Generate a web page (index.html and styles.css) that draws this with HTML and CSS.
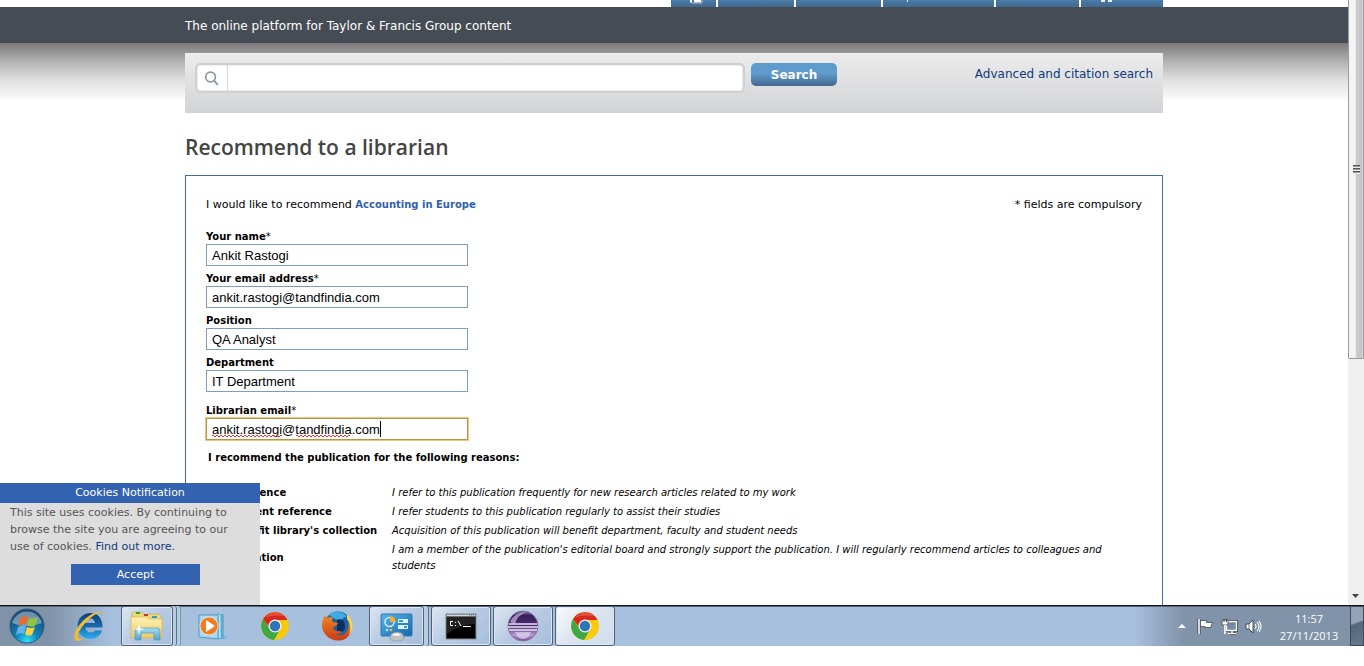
FILE: index.html
```html
<!DOCTYPE html>
<html lang="en">
<head>
<meta charset="utf-8">
<title>Recommend to a librarian</title>
<link rel="stylesheet" href="styles.css">
</head>
<body>
<svg class="defs" width="0" height="0" aria-hidden="true">
  <defs>
    <radialGradient id="orb" cx=".5" cy=".95" r=".8"><stop offset="0" stop-color="#2fe3ff"/><stop offset=".4" stop-color="#1287bd"/><stop offset="1" stop-color="#1b4a74"/></radialGradient>
    <linearGradient id="ie" x1="0" y1="0" x2="0" y2="1"><stop offset="0" stop-color="#0d3f7a"/><stop offset=".5" stop-color="#1767ae"/><stop offset="1" stop-color="#2ab0f0"/></linearGradient>
    <linearGradient id="folder" x1="0" y1="0" x2="0" y2="1"><stop offset="0" stop-color="#fdf3b4"/><stop offset="1" stop-color="#eac968"/></linearGradient>
    <linearGradient id="glass" x1="0" y1="0" x2="0" y2="1"><stop offset="0" stop-color="#a9dcf2"/><stop offset="1" stop-color="#4fa5cf"/></linearGradient>
    <linearGradient id="panel" x1="0" y1="0" x2="1" y2="1"><stop offset="0" stop-color="#56b4ea"/><stop offset="1" stop-color="#1767ae"/></linearGradient>
    <linearGradient id="ecl" x1="0" y1="0" x2="0" y2="1"><stop offset="0" stop-color="#8d76ad"/><stop offset=".15" stop-color="#38205a"/><stop offset=".5" stop-color="#4b2d75"/><stop offset=".8" stop-color="#b39bd0"/><stop offset="1" stop-color="#6d4e94"/></linearGradient>
    <linearGradient id="fox" x1="0" y1="0" x2="0" y2="1"><stop offset="0" stop-color="#f08a24"/><stop offset="1" stop-color="#c93a16"/></linearGradient>
    <symbol id="chrome" viewBox="0 0 30 30">
      <circle cx="15" cy="15" r="14" fill="#f8c90c"/>
      <path d="M3 8A14 14 0 0 0 14 29L20 18.500 15 15 9.500 17.500Z" fill="#3fa844"/>
      <path d="M3 8A14 14 0 0 1 27.500 9H15a6.500 6.500 0 0 0-6 7z" fill="#d8291e"/>
      <path d="M5 6.500A14 14 0 0 1 25 5.500Q15 3 5 6.500Z" fill="#ee6a5e" opacity=".6"/>
      <circle cx="15" cy="15" r="6.500" fill="#f3f5f6"/>
      <circle cx="15" cy="15" r="5.200" fill="#2f74b8"/>
    </symbol>
  </defs>
</svg>

<div class="browser">
  <div class="page">
    <nav class="tabs container" aria-label="Account">
      <a class="tab tab-home" href="#" aria-label="Home"><svg width="14" height="4" viewBox="0 0 14 4"><path d="M1 0h2v2.500H1zM5 0h7v2.500H5z" fill="#fff"/><path d="M3 3h10V0" fill="none" stroke="#bbb"/></svg></a>
      <a class="tab tab-b" href="#" aria-label="Register"></a>
      <a class="tab tab-c" href="#" aria-label="Sign in"></a>
      <a class="tab tab-d" href="#" aria-label="Help"><svg width="2" height="2" viewBox="0 0 2 2"><path d="M0 0h1v2H0z" fill="#e8eff5"/></svg></a>
      <a class="tab tab-e" href="#" aria-label="Mobile"></a>
      <a class="tab tab-f" href="#" aria-label="Cart"><svg width="12" height="2" viewBox="0 0 12 2"><path d="M0 0h4v2H0zM7 0h4v2H7z" fill="#e8eff5"/></svg></a>
    </nav>
    <header class="banner"><p class="container tagline">The online platform for Taylor &amp; Francis Group content</p></header>
    <div class="shade">
      <form class="container search">
        <div class="search-box">
          <svg class="search-icon" width="31" height="26" viewBox="0 0 31 26" aria-hidden="true"><circle cx="14" cy="12" r="5" fill="none" stroke="#8a97a3" stroke-width="1.800"/><path d="m17.500 15.500 4 4.500" stroke="#8a97a3" stroke-width="2"/></svg>
          <input class="search-input" type="text" aria-label="Search">
        </div>
        <button class="search-button" type="button">Search</button>
        <a class="advanced" href="#">Advanced and citation search</a>
      </form>
    </div>
    <main class="container main">
      <h1 class="title">Recommend to a librarian</h1>
      <form class="card">
        <div class="intro">
          <p>I would like to recommend <a class="journal" href="#">Accounting in Europe</a></p>
          <p>* fields are compulsory</p>
        </div>
        <div class="field"><label for="name">Your name<span class="star">*</span></label><input id="name" type="text" value="Ankit Rastogi"></div>
        <div class="field"><label for="email">Your email address<span class="star">*</span></label><input id="email" type="text" value="ankit.rastogi@tandfindia.com"></div>
        <div class="field"><label for="position">Position</label><input id="position" type="text" value="QA Analyst"></div>
        <div class="field"><label for="department">Department</label><input id="department" type="text" value="IT Department"></div>
        <div class="field librarian">
          <label for="librarian">Librarian email<span class="star">*</span></label>
          <div class="focused">
            <input id="librarian" type="text" value="ankit.rastogi@tandfindia.com" spellcheck="false">
            <svg class="marks" width="180" height="20" viewBox="0 0 180 20" aria-hidden="true"><path d="M6 16.500H76M90 16.500H144" stroke="#e33" stroke-width="1" stroke-dasharray="2 2"/><path d="M8 17.500H76M92 17.500H144" stroke="#e33" stroke-width="1" stroke-dasharray="2 2"/><path d="M174.500 2v16" stroke="#000"/></svg>
          </div>
        </div>
        <p class="reasons-title">I recommend the publication for the following reasons:</p>
        <table class="reasons">
          <tr><td class="tick"><input type="checkbox" id="r1"></td><th><label for="r1">Reference</label></th><td>I refer to this publication frequently for new research articles related to my work</td></tr>
          <tr><td class="tick"><input type="checkbox" id="r2"></td><th><label for="r2">Student reference</label></th><td>I refer students to this publication regularly to assist their studies</td></tr>
          <tr><td class="tick"><input type="checkbox" id="r3"></td><th><label for="r3">Benefit library's collection</label></th><td>Acquisition of this publication will benefit department, faculty and student needs</td></tr>
          <tr><td class="tick"><input type="checkbox" id="r4"></td><th><label for="r4">Affiliation</label></th><td>I am a member of the publication's editorial board and strongly support the publication. I will regularly recommend articles to colleagues and students</td></tr>
        </table>
      </form>
    </main>
  </div>
  <div class="scrollbar" aria-hidden="true">
    <div class="thumb"><span class="grip"></span></div>
    <svg class="down" width="8" height="5" viewBox="0 0 8 5"><path d="M0 0h7L3.500 4z" fill="#444"/></svg>
  </div>
  <aside class="cookies">
    <h2 class="cookies-title">Cookies Notification</h2>
    <p class="cookies-text">This site uses cookies. By continuing to browse the site you are agreeing to our use of cookies. <a href="#">Find out more.</a></p>
    <button class="accept" type="button">Accept</button>
  </aside>
</div>

<footer class="taskbar">
  <button class="start" type="button" aria-label="Start"><svg width="36" height="36" viewBox="0 0 36 36">
    <circle cx="18" cy="18" r="17" fill="url(#orb)" stroke="#315a80"/>
    <path d="M3 15A15.500 15.500 0 0 1 33 15Q18 21 3 15Z" fill="#d5e6f1" opacity=".45"/>
    <path d="M11 10q4-3 8-1l-2 8q-4-2-8 1z" fill="#ee6a2c"/><path d="M20 10q4 2 9-1l-3 9q-4 2-8-1z" fill="#8fc43c"/>
    <path d="M9 19q4-3 8-1l-2 8q-4-2-8 1z" fill="#61b5ea"/><path d="M18 19q4 2 8 0l-3 8q-4 2-7-1z" fill="#fbd13d"/>
  </svg></button>
  <button class="task" type="button" aria-label="Internet Explorer"><svg width="34" height="34" viewBox="0 0 34 34">
    <path fill-rule="evenodd" d="M18.500 4C26 4 31 10 30.500 18.500H13.500C14 22 16 23.500 19 23.500 21 23.500 22.500 22.500 23 21.500H30C28 27 24 30 18.500 30 11 30 5.500 24.500 5.500 17S11 4 18.500 4ZM13.500 14H23C22.500 11 21 9.500 18.500 9.500S14 11 13.500 14Z" fill="url(#ie)"/>
    <path d="M31 10C34 4 30 1 22 4 11 9 0 23 3 30 4 33 9 32 13 29 8 31 5 30 6 25 9 17 19 7 26 4 31 2 32 5 31 10Z" fill="#f5bd2c"/>
  </svg></button>
  <button class="task window stacked many" type="button" aria-label="Windows Explorer"><svg width="34" height="34" viewBox="0 0 34 34">
    <path d="M2 8V5q0-2 2-2h8l2 3h4l1-1h10l2 3v16H2z" fill="#f0d777" stroke="#c8a548" stroke-width=".6"/>
    <path d="M6 3h4v2H6z" fill="#25a52d"/><path d="M14 5h4v2h-4z" fill="#c83b2c"/><path d="M22 7h5v2h-5z" fill="#3498dc"/>
    <path d="M1 8h16l2 2h13v19H1z" fill="url(#folder)" stroke="#d0ab4c" stroke-width=".6"/>
    <path d="M5 31V22q0-3 3-3h19q3 0 3 3v9h-6v-7H11v7z" fill="url(#glass)" stroke="#4f9bbf" stroke-width=".7"/>
    <path d="m9 15 1 4 4 1-4 1-1 5-1-5-4-1 4-1z" fill="#fff"/>
  </svg></button>
  <button class="task" type="button" aria-label="Media Player"><svg width="34" height="34" viewBox="0 0 34 34">
    <path d="m10 6 18-1v25l-10-1zM28 28l4-1-3 3z" fill="#65afd5"/><path d="m22 5 3 1v24l-3-1zM19 6l2 1v21l-2-1z" fill="#bde3f3" stroke="#4b9cc7" stroke-width=".7"/>
    <path d="M3 6h18l1 1v23L3 28z" fill="#a9d7ed" stroke="#4b9cc7"/>
    <circle cx="13" cy="17" r="9" fill="#f47a20" stroke="#fff" stroke-width=".6"/><path d="m10 11 9 6-9 6z" fill="#fff"/>
  </svg></button>
  <button class="task" type="button" aria-label="Chrome"><svg width="30" height="30"><use href="#chrome"/></svg></button>
  <button class="task" type="button" aria-label="Firefox"><svg width="32" height="32" viewBox="0 0 32 32">
    <circle cx="17" cy="15" r="13.500" fill="#1a62a8"/><path d="M8 5Q17-2 26 6Q20 11 14 9Z" fill="#3eabe2"/><path d="M16 10q8-2 8 6t-8 5z" fill="#102e62"/>
    <path d="M26 5C33 11 33 24 24 29C13 34 1 26 1 15C1 11 3 7 4 5L6 8Q9 6 12 8Q10 11 12 12L17 13Q16 16 12 17Q13 22 18 21L21 22Q18 25 14 24Q23 28 27 19Q29 12 26 5Z" fill="url(#fox)"/>
    <path d="M26 4C33 10 33 20 28 25Q31 15 26 9Z" fill="#fbd34b"/>
  </svg></button>
  <button class="task window stacked" type="button" aria-label="Control Panel"><svg width="34" height="34" viewBox="0 0 34 34">
    <rect x="1" y="5" width="31" height="22" rx="1" fill="url(#panel)" stroke="#2e78b4"/>
    <circle cx="9.500" cy="13" r="4.500" fill="none" stroke="#d7f1fc" stroke-width="1.500"/><path d="M10 13V7q5 0 6 6z" fill="#f9ad30"/>
    <path d="M18 10h10v4H18zM18 16h10v4H18z" fill="#dff4ff"/><path d="M19 11h4v2h-4zM24 17h3v2h-3z" fill="#25a4d8"/><circle cx="7" cy="21" r="1.300" fill="#a6ecff"/><circle cx="11" cy="21" r="1.300" fill="#f8b43b"/>
    <path d="M10 29q0-6 7-6t7 6q0 3-7 3t-7-3z" fill="#bdbfc2" stroke="#7f8388" stroke-width=".5"/><path d="M12 26q5-4 9 0-4 2-9 0z" fill="#f6f6f6"/>
  </svg></button>
  <button class="task window" type="button" aria-label="Command Prompt"><svg width="32" height="28" viewBox="0 0 32 28">
    <rect x="1" y="2" width="30" height="25" fill="#000" stroke="#85898d"/><path d="M1.500 2.500h29v2h-29z" fill="#d4dce3"/><path d="M24 3h1M26 3h1M28 3h1" stroke="#456"/>
    <path d="M2 5h28v7Q16 12 2 22Z" fill="#444" opacity=".5"/><path d="M8 9.500H5.500v4H8M10.500 10v1M10.500 13v1M13 9l3 5M18 14.500h8" fill="none" stroke="#fff"/>
  </svg></button>
  <button class="task window" type="button" aria-label="Eclipse"><svg width="32" height="32" viewBox="0 0 32 32">
    <circle cx="16" cy="16" r="15" fill="url(#ecl)" stroke="#8370a1"/><path d="M3 12Q7 2 20 2Q10 5 8 14Z" fill="#c7b8da" opacity=".7"/>
    <path d="M2 14h28M1 17h30M2 20h28" stroke="#e9e0f4" stroke-width="1.300"/><path d="M8 22h16q-2 7-8 7t-8-7z" fill="#eee6f7" opacity=".6"/>
  </svg></button>
  <button class="task window active" type="button" aria-label="Chrome"><svg width="30" height="30"><use href="#chrome"/></svg></button>
  <div class="tray">
    <svg width="8" height="4" viewBox="0 0 8 4" aria-hidden="true"><path d="M0 4 4 0l4 4z" fill="#fff"/></svg>
    <svg width="17" height="17" viewBox="0 0 17 17" aria-hidden="true"><path d="M2 1v15" stroke="#333f4d" stroke-width="3"/><path d="M3.500 2.500h6v2h6l-2 5H8v-1H3.500z" fill="#fff" stroke="#3d4958" stroke-width=".8"/><path d="M2 1v15" stroke="#fff" stroke-width="1.600"/></svg>
    <svg width="17" height="17" viewBox="0 0 17 17" aria-hidden="true"><path d="M5.500 3.500h10v9h-10zM8 15.500h7M11 13v2" fill="#7f95ac" stroke="#303d4c" stroke-width="3"/><path d="M5.500 3.500h10v9h-10zM7 15.500h8M11 13v2" fill="#748ba4" stroke="#fff" stroke-width="1.400"/><path d="M1 2h6v5H1z" fill="#fff" stroke="#36424f" stroke-width=".8"/><path d="M3 1v3M5.500 1v3" stroke="#36424f"/><path d="M4 7v9" stroke="#fff" stroke-width="1.600"/></svg>
    <svg width="17" height="17" viewBox="0 0 17 17" aria-hidden="true"><path d="M1 6h3l4-4v13l-4-4H1z" fill="#fff" stroke="#36424f" stroke-width=".9"/><path d="M4 6v5" stroke="#6c7c8e"/><path d="M10 6q2 2.500 0 5M12 4q4 4.500 0 9M14 3q4 5.500 0 11" fill="none" stroke="#fff" stroke-width="1.100"/></svg>
  </div>
  <div class="clock"><time>11:57</time><time>27/11/2013</time></div>
  <button class="desktop" type="button" aria-label="Show desktop"></button>
</footer>
</body>
</html>
```
FILE: styles.css
```css
* { box-sizing: border-box; }

body {
  margin: 0;
  height: 100vh;
  padding-bottom: 20px;
  display: flex;
  flex-direction: column;
  background: #fff;
  color: #000;
  font: 10px/16px "DejaVu Sans", Verdana, sans-serif;
}

h1, h2, p { margin: 0; }
a { color: #10397f; text-decoration: none; }
button, input { font: inherit; margin: 0; }
svg { display: block; }
.defs { position: absolute; }

.browser {
  position: relative;
  flex: 1;
  min-height: 0;
  display: flex;
  overflow: hidden;
}
.page { flex: 1; min-width: 0; }
.container { width: 100%; max-width: 978px; margin: 0 auto; }

.tabs { display: flex; justify-content: flex-end; gap: 2px; height: 7px; }
.tab { background: linear-gradient(#4a7ba8, #41698f); }
.tab-home { width: 45px; padding-left: 18px; }
.tab-b { width: 76px; }
.tab-c { width: 85px; }
.tab-d { width: 111px; padding-left: 24px; }
.tab-e { width: 83px; }
.tab-f { width: 82px; padding-left: 20px; }

.banner { background: #464c54; color: #fff; }
.tagline { padding: 10px 0 8px; font-size: 12px; line-height: 18px; }

.shade {
  padding-top: 10px;
  background: linear-gradient(#7b797d, #b6b6b6 20px, #e2e2e2 38px, #fafafa 56px, #fff 57px);
}
.search {
  display: flex;
  align-items: flex-start;
  height: 60px;
  padding: 10px 10px 0;
  background: linear-gradient(#ececec, #d2d3d6);
}
.search-box {
  display: flex;
  flex: 0 1 550px;
  height: 30px;
  border: 2px solid #d0d0d2;
  border-radius: 5px;
  background: #fff;
  box-shadow: inset 0 0 2px #bbb;
}
.search-icon { flex: none; border-right: 1px solid #d8d8da; }
.search-input { flex: 1; min-width: 0; border: 0; background: transparent; outline: 0; }
.search-button {
  width: 86px;
  height: 23px;
  margin-left: 6px;
  padding: 0;
  border: 0;
  border-radius: 5px;
  background: linear-gradient(#609bcd 45%, #41678d);
  color: #fff;
  font-size: 12px;
  font-weight: bold;
}
.advanced { margin-left: auto; font-size: 12px; line-height: 22px; }

.title {
  padding: 19px 0 13px;
  color: #444;
  font: 600 21px/30px "Open Sans", sans-serif;
}
.card { min-height: 500px; padding: 21px 20px; border: 1px solid #416ba6; }
.intro { display: flex; justify-content: space-between; margin-bottom: 16px; font-size: 11px; }
.journal { color: #3160b0; font-size: 10px; font-weight: bold; }
.star { font-weight: normal; }

.field { display: flex; flex-direction: column; width: 262px; margin-bottom: 5px; }
.field label { font-weight: bold; line-height: 15px; }
.field input {
  width: 100%;
  height: 22px;
  padding: 0 5px;
  border: 1px solid #7f9db9;
  background: #fff;
  font: 13px/20px "Liberation Sans", Arial, sans-serif;
}
.librarian { margin-top: 11px; }
.focused { position: relative; }
.focused input { display: block; border-color: #b8924a; box-shadow: 0 0 0 1px #f0c877; }
.marks { position: absolute; left: 0; top: 1px; }
.reasons-title { margin: 10px 0 18px 2px; font-weight: bold; }

.reasons { border-collapse: collapse; }
.reasons td, .reasons th { padding: 1px 0 2px; text-align: left; }
.reasons td { font-style: italic; }
.reasons th { width: 163px; white-space: nowrap; }
.reasons .tick { width: 23px; }
.tick input { display: block; width: 13px; height: 13px; }

.scrollbar {
  display: flex;
  flex-direction: column;
  justify-content: space-between;
  align-items: center;
  width: 16px;
  padding-bottom: 6px;
  background: #efefef;
}
.thumb {
  display: flex;
  justify-content: center;
  width: 100%;
  height: 60%;
  max-height: 360px;
  border: solid #999;
  border-width: 0 1px 1px;
  border-radius: 0 0 2px 2px;
  background: linear-gradient(90deg, #f4f4f4 45%, #ceced2 50%, #c3c3c7 90%, #ddd);
}
.grip {
  width: 7px;
  height: 9px;
  margin-top: 165px;
  background: repeating-linear-gradient(#555 0 1px, #999 1px 2px, #eee 2px 3px);
}

.cookies {
  position: absolute;
  left: 0;
  bottom: 0;
  width: 260px;
  padding-bottom: 20px;
  background: #ddd;
  color: #555;
}
.cookies-title { background: #3262b0; color: #fff; font-size: 11px; font-weight: normal; line-height: 20px; text-align: center; }
.cookies-text { padding: 1px 10px 0; font-size: 11px; line-height: 17px; }
.accept {
  display: block;
  width: 129px;
  height: 21px;
  margin: 9px auto 0 71px;
  padding: 0;
  border: 0;
  background: #3262b0;
  color: #fff;
  font-size: 11px;
}

.taskbar {
  display: flex;
  gap: 2px;
  height: 41px;
  border-top: 1px solid #101216;
  background: linear-gradient(90deg, #8193a9 50px, #a7c0de 112px, #a7c0de calc(100% - 230px), #8193a9 calc(100% - 180px));
  box-shadow: inset 0 1px #56657a;
}
.taskbar button { padding: 0; border: 0; background: none; }
.start { width: 54px; margin-right: 3px; display: flex; align-items: center; justify-content: center; }
.taskbar .task {
  flex: 0 0 60px;
  display: flex;
  align-items: center;
  justify-content: center;
  border: 1px solid transparent;
}
.taskbar .window {
  border-color: #4f6075;
  border-radius: 3px;
  background: linear-gradient(135deg, #dde6f1, #b9cce3 45%, #a6bedb);
  box-shadow: inset 0 0 0 1px #dce6f2;
}
.taskbar .active { background: linear-gradient(135deg, #f8fafc, #dbe4ef 50%, #d0deed); }
.taskbar .stacked {
  flex-basis: 55px;
  margin-right: 5px;
  box-shadow: inset 0 0 0 1px #dce6f2, 4px 0 #b7cbe2, 5px 0 #61738a;
}
.taskbar .many {
  flex-basis: 52px;
  margin-right: 8px;
  box-shadow: inset 0 0 0 1px #dce6f2, 3px 0 #b7cbe2, 4px 0 #61738a, 7px 0 #b7cbe2, 8px 0 #7f93ad;
}
.tray { display: flex; align-items: center; gap: 7px; margin-left: auto; }
.tray svg:first-child { margin-right: 4px; }
.clock {
  display: flex;
  flex-direction: column;
  align-items: center;
  width: 62px;
  margin: 4px 8px 0 14px;
  color: #fff;
  font: 11px/17px "Open Sans", sans-serif;
}
.taskbar .desktop {
  width: 14px;
  border: 1px solid #3d4a5c;
  background: linear-gradient(160deg, #94a3b5 40%, #53667c 45%, #64788f);
}
```
